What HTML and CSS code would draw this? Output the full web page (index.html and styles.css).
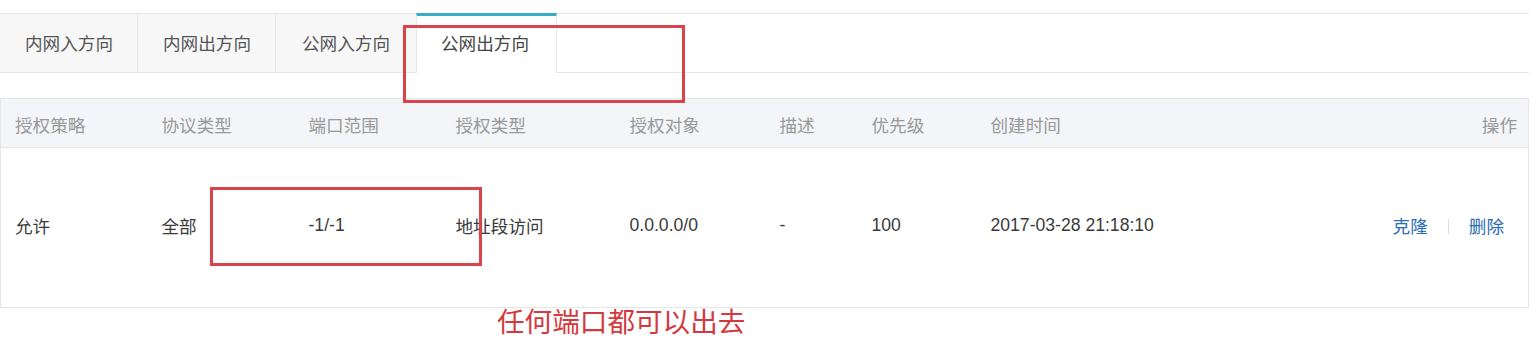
FILE: index.html
```html
<!DOCTYPE html>
<html lang="zh-CN">
<head>
	<meta charset="UTF-8">
	<title>安全组规则</title>
	<link rel="stylesheet" href="styles.css">
</head>
<body>
	<div class="page">
		<div class="tabs">
			<div class="tab">内网入方向</div>
			<div class="tab">内网出方向</div>
			<div class="tab tab3">公网入方向</div>
			<div class="tab active">公网出方向</div>
		</div>

		<table class="rules">
			<colgroup>
				<col class="c1"><col class="c2"><col class="c3"><col class="c4">
				<col class="c5"><col class="c6"><col class="c7"><col class="c8"><col>
			</colgroup>
			<thead>
				<tr>
					<th>授权策略</th>
					<th>协议类型</th>
					<th>端口范围</th>
					<th>授权类型</th>
					<th>授权对象</th>
					<th>描述</th>
					<th>优先级</th>
					<th>创建时间</th>
					<th class="ops">操作</th>
				</tr>
			</thead>
			<tbody>
				<tr>
					<td>允许</td>
					<td>全部</td>
					<td>-1/-1</td>
					<td>地址段访问</td>
					<td>0.0.0.0/0</td>
					<td>-</td>
					<td>100</td>
					<td>2017-03-28 21:18:10</td>
					<td class="ops"><a href="#">克隆</a><span class="sep"></span><a href="#">删除</a></td>
				</tr>
			</tbody>
		</table>

		<!-- annotations drawn on top of the screenshot -->
		<div class="mark mark-tab"></div>
		<div class="mark mark-port"></div>
		<p class="note">任何端口都可以出去</p>
	</div>
</body>
</html>
```

FILE: styles.css
```css
body{
	margin: 0;
	background: #fff;
	font-family: "Liberation Sans", "Noto Sans CJK SC", sans-serif;
	font-size: 17.6px;
	color: #3a3a3a;
}
.page{
	position: relative;
	width: 1529px;
	height: 359px;
	padding-top: 13px;
	box-sizing: border-box;
}
.tabs{
	display: flex;
	height: 58px;
	border-top: 1px solid #e6e6e6;
	border-bottom: 1px solid #e6e6e6;
}
.tab{
	width: 138px;
	border-right: 1px solid #e6e6e6;
	background: #f7f7f8;
	color: #555;
	line-height: 61px;
	padding-left: 25px;
	box-sizing: border-box;
}
.tab3{
	width: 140px;
	padding-left: 26px;
	border-right: none;
}
.tab.active{
	width: 141px;
	margin-top: -1px;
	height: 60px;
	border-top: 3px solid #38abcb;
	border-left: 1px solid #e6e6e6;
	background: #fff;
	color: #444;
	line-height: 57px;
	padding-left: 24px;
}
.rules{
	margin-top: 25px;
	width: 1529px;
	table-layout: fixed;
	border-collapse: collapse;
	border: 1px solid #e6e6e6;
}
.c1,.c2,.c3{ width: 147px; }
.c4{ width: 174px; }
.c5{ width: 150px; }
.c6{ width: 92px; }
.c7{ width: 119px; }
.c8{ width: 300px; }
.rules th{
	height: 49px;
	padding: 2px 0 0 14px;
	box-sizing: border-box;
	background: #f4f5f8;
	color: #999;
	font-weight: normal;
	text-align: left;
	border-bottom: 1px solid #e6e6e6;
	white-space: nowrap;
}
.rules td{
	height: 160px;
	padding: 0 0 4px 14px;
	box-sizing: border-box;
	white-space: nowrap;
}
.rules th.ops{
	text-align: right;
	padding-right: 11px;
}
.rules td.ops{
	text-align: right;
	padding-right: 24px;
}
.ops a{
	color: #2a6cb5;
	text-decoration: none;
}
.sep{
	display: inline-block;
	width: 0;
	height: 15px;
	border-left: 1px solid #ddd;
	margin: 0 20px;
	vertical-align: -1px;
}
.mark{
	position: absolute;
	border: 3px solid #d9434a;
	box-sizing: border-box;
}
.mark-tab{
	left: 403px;
	top: 25px;
	width: 282px;
	height: 78px;
}
.mark-port{
	left: 210px;
	top: 187px;
	width: 272px;
	height: 79px;
}
.note{
	position: absolute;
	left: 497px;
	top: 304px;
	margin: 0;
	font-family: "Noto Sans CJK SC", sans-serif;
	font-size: 27.6px;
	line-height: 32px;
	color: #d23a40;
}
```
